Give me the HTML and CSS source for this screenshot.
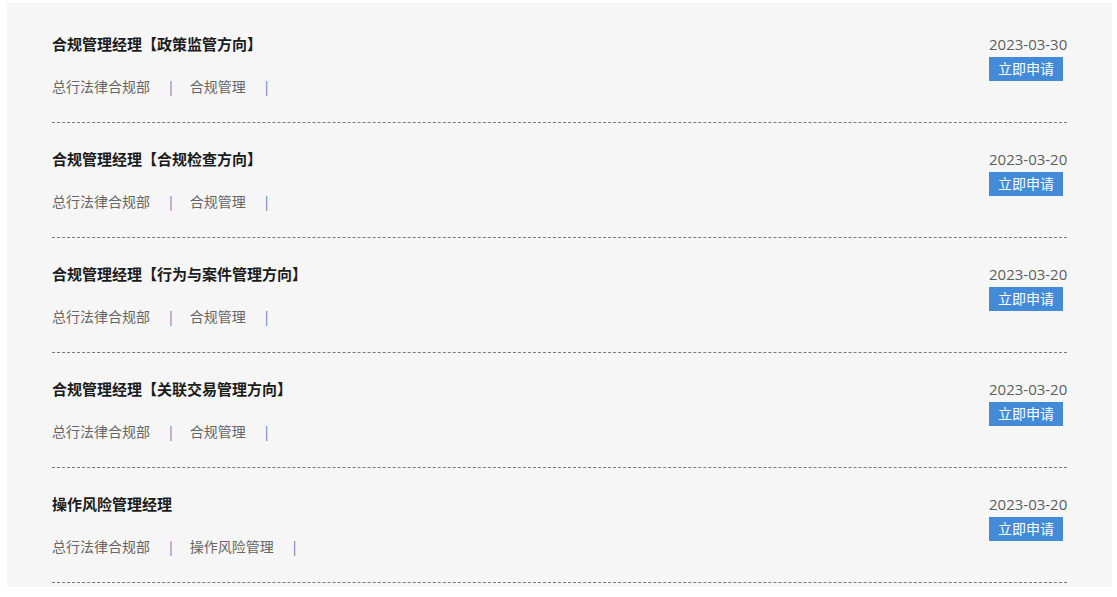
FILE: index.html
```html
<!DOCTYPE html>
<html lang="zh-CN">
<head>
<meta charset="utf-8">
<title>职位列表</title>
<link rel="stylesheet" href="styles.css">
</head>
<body>
<div class="panel">
  <ul class="job-list">
    <li class="job">
      <div class="job-main">
        <div class="job-title">合规管理经理【政策监管方向】</div>
        <div class="job-meta"><span>总行法律合规部</span><span class="sep">|</span><span>合规管理</span><span class="sep">|</span></div>
      </div>
      <div class="job-side">
        <div class="job-date">2023-03-30</div>
        <a class="apply" href="#">立即申请</a>
      </div>
    </li>
    <li class="job">
      <div class="job-main">
        <div class="job-title">合规管理经理【合规检查方向】</div>
        <div class="job-meta"><span>总行法律合规部</span><span class="sep">|</span><span>合规管理</span><span class="sep">|</span></div>
      </div>
      <div class="job-side">
        <div class="job-date">2023-03-20</div>
        <a class="apply" href="#">立即申请</a>
      </div>
    </li>
    <li class="job">
      <div class="job-main">
        <div class="job-title">合规管理经理【行为与案件管理方向】</div>
        <div class="job-meta"><span>总行法律合规部</span><span class="sep">|</span><span>合规管理</span><span class="sep">|</span></div>
      </div>
      <div class="job-side">
        <div class="job-date">2023-03-20</div>
        <a class="apply" href="#">立即申请</a>
      </div>
    </li>
    <li class="job">
      <div class="job-main">
        <div class="job-title">合规管理经理【关联交易管理方向】</div>
        <div class="job-meta"><span>总行法律合规部</span><span class="sep">|</span><span>合规管理</span><span class="sep">|</span></div>
      </div>
      <div class="job-side">
        <div class="job-date">2023-03-20</div>
        <a class="apply" href="#">立即申请</a>
      </div>
    </li>
    <li class="job">
      <div class="job-main">
        <div class="job-title">操作风险管理经理</div>
        <div class="job-meta"><span>总行法律合规部</span><span class="sep">|</span><span>操作风险管理</span><span class="sep">|</span></div>
      </div>
      <div class="job-side">
        <div class="job-date">2023-03-20</div>
        <a class="apply" href="#">立即申请</a>
      </div>
    </li>
  </ul>
</div>
</body>
</html>
```
FILE: styles.css
```css
html, body {
  margin: 0;
  padding: 0;
  background: #ffffff;
}
body {
  font-family: "Open Sans", "Noto Sans CJK SC", sans-serif;
  font-size: 14px;
  color: #333;
  padding: 3px 5px 10px 7px;
}
.panel {
  background: #f6f6f6;
  padding: 5px 45px 4px 45px;
}
.job-list {
  list-style: none;
  margin: 0;
  padding: 0;
}
.job {
  display: flex;
  justify-content: space-between;
  padding: 26px 0 25px 0;
  border-bottom: 1px dashed #7a7a7a;
}
.job-title {
  font-weight: bold;
  font-size: 15px;
  color: #1c1c1c;
  line-height: 20px;
  height: 20px;
}
.job-meta {
  margin-top: 23px;
  line-height: 20px;
  height: 20px;
  color: #666;
}
.sep {
  color: #4f86c6;
  margin: 0 15px 0 17px;
}
.job-side {
  width: 78px;
  display: flex;
  flex-direction: column;
  align-items: flex-start;
}
.job-date {
  font-size: 15px;
  line-height: 20px;
  color: #5e5e5e;
  white-space: nowrap;
}
.apply {
  margin-top: 3px;
  display: block;
  width: 74px;
  height: 24px;
  line-height: 24px;
  text-align: center;
  background: #428bd9;
  color: #fff;
  text-decoration: none;
}
```
